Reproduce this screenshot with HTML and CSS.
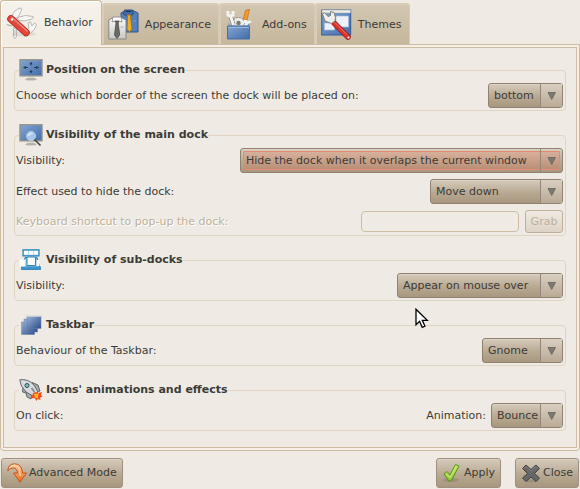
FILE: index.html
```html
<!DOCTYPE html>
<html lang="en">
<head>
<meta charset="utf-8">
<title>Dock configuration</title>
<link rel="stylesheet" href="styles.css">
</head>
<body>
<svg class="defs" aria-hidden="true">
  <defs>
    <linearGradient id="blue" x1="0" y1="0" x2="1" y2="1"><stop offset="0" stop-color="#83a7d4"/><stop offset="1" stop-color="#426ba8"/></linearGradient>
    <linearGradient id="shirt" x1="0" y1="0" x2="0" y2="1"><stop offset="0" stop-color="#fafafa"/><stop offset="1" stop-color="#c9c9c5"/></linearGradient>
    <linearGradient id="navy" x1="0" y1="0" x2="1" y2="1"><stop offset="0" stop-color="#9db5d8"/><stop offset="1" stop-color="#2c4c8c"/></linearGradient>
    <linearGradient id="orange" x1="0" y1="0" x2="0" y2="1"><stop offset="0" stop-color="#fbd0a4"/><stop offset="1" stop-color="#e8681c"/></linearGradient>
    <linearGradient id="green" x1="0" y1="0" x2="0" y2="1"><stop offset="0" stop-color="#c4ec5c"/><stop offset="1" stop-color="#8cc63a"/></linearGradient>
    <symbol id="arrow" viewBox="0 0 9 8"><path d="M1 .5h7.5L4.7 7.5z" fill="#7d7972" stroke="#67635c" stroke-width=".8"/></symbol>
    <symbol id="monitor" viewBox="0 0 24 22">
      <ellipse cx="12" cy="20.300" rx="6" ry="1.300" fill="#b9b7b1"/>
      <path d="M9 17h6l1 3H8z" fill="#dddcd8"/><path d="M8 19.800h8" stroke="#a4a29d"/>
      <rect x="1" y=".8" width="22" height="16" fill="url(#blue)" stroke="#92928e" stroke-width="1.400"/>
    </symbol>
  </defs>
</svg>

<main class="dialog">
  <div class="tabs" role="tablist">
    <button class="tab active" role="tab" aria-selected="true">
      <svg class="tab-icon" viewBox="0 0 32 32" aria-hidden="true">
        <ellipse cx="18" cy="27" rx="12" ry="2.500" fill="#e2dcd1"/>
        <g fill="#f6f6f4" stroke="#a9a9a5" stroke-width=".8">
          <path d="M6 10Q7 3 15 .8l.5 2.500-4 8z"/>
          <path d="M11 10.500Q20 7 27 9.500q1 2-1 2.500-7 3-13 1.500z"/>
          <path d="M20 24l3-3-1-5 2.500-1 1.500 4 2.500-3 2 1.500-2 5-5 4.500z"/>
          <path d="M7.500 20.500l3 2v7l-1.500 2-1.500-2z"/>
        </g>
        <path d="M7.500 24h3M7.500 26h3M7.500 28h3" stroke="#999" stroke-width=".7"/>
        <path d="M.8 17.500l5 1.500" stroke="#aaa" stroke-width="1.300"/>
        <path d="M5 12L20 25.500" stroke="#a92a22" stroke-width="7.500" stroke-linecap="round"/>
        <path d="M5 12L20 25.500" stroke="#e2463c" stroke-width="6" stroke-linecap="round"/>
        <path d="M6 10.500L21 24" stroke="#f2877b" stroke-width="1.500" stroke-linecap="round"/>
        <circle cx="6" cy="12.500" r="1.200" fill="#fff"/>
      </svg>
      <span>Behavior</span>
    </button>
    <button class="tab" role="tab" aria-selected="false">
      <svg class="tab-icon" viewBox="0 0 32 32" aria-hidden="true">
        <path d="M13 4l5-2.500h7L30 4v19H14z" fill="#537fba" stroke="#2f5690"/>
        <path d="M16.500 1h8l1 4-5 3-5-3z" fill="#426ca6" stroke="#2a4c80"/><path d="M18 2.500h5" stroke="#182e50"/>
        <path d="M19 6h4l-.5 2 1.500 12-2.500 3-2.500-3L19.700 8z" fill="#f0ad21" stroke="#a47010" stroke-width=".8"/>
        <path d="M.8 11L5 8.500h8l5 2.500v19H.8z" fill="url(#shirt)" stroke="#858582"/>
        <path d="M5 8h8l1 5-3-1-2 1-2-1-3 1z" fill="#fff" stroke="#858582" stroke-width=".8"/>
        <path d="M7 12h4l-.8 2 1.500 12L9 29.500 6.500 26 8 14z" fill="#6b6b66" stroke="#434340" stroke-width=".7"/>
        <path d="M12.500 18h3M25 12h3" stroke="#9aa4ac" stroke-width=".8"/>
      </svg>
      <span>Appearance</span>
    </button>
    <button class="tab" role="tab" aria-selected="false">
      <svg class="tab-icon" viewBox="0 0 32 32" aria-hidden="true">
        <path d="M20.500 1.500l4-1.300-2.500 11h-4z" fill="#f29a30" stroke="#c36b12" stroke-width=".7"/>
        <circle cx="13.500" cy="15" r="6.500" fill="#ecece9" stroke="#858580" stroke-dasharray="2 1"/><circle cx="13.500" cy="14" r="2.200" fill="#777771"/>
        <g fill="none" stroke="#858580" stroke-width="4.400"><path d="M5.500 7l3 9M23.500 13l-4 5"/></g>
        <g fill="none" stroke="#f3f3f1" stroke-width="3"><path d="M3 2v4q2.500 2 5 0V2M5.500 7l3 9M20.500 11v2q3 2 5-1M23.500 13l-4 5"/></g>
        <path d="M3 14.500l3 3h16l3-3" fill="none" stroke="#8ca0b8" stroke-width="1.500"/>
        <path d="M2.500 17h22v13h-22z" fill="url(#blue)" stroke="#426da8"/><path d="M3 18.500h21" stroke="#9ab9dc"/>
      </svg>
      <span>Add-ons</span>
    </button>
    <button class="tab" role="tab" aria-selected="false">
      <svg class="tab-icon" viewBox="0 0 32 32" aria-hidden="true">
        <rect x=".7" y="1" width="29" height="25" fill="url(#blue)" stroke="#325da0"/>
        <path d="M1 1h28.500v3H1z" fill="#eeeeec" stroke="#aaa" stroke-width=".6"/>
        <path d="M15 7h12.500v11H15zM3.500 14h10v7h-10z" fill="#eef2f8" stroke="#a3bad8" stroke-width=".7"/>
        <path d="M13 14l14 14" stroke="#9b1717" stroke-width="5.500" stroke-linecap="round"/>
        <path d="M13 14l14 14" stroke="#dd3430" stroke-width="4" stroke-linecap="round"/><path d="M14 13.500l12 12" stroke="#f37a6d"/>
        <path d="M1.500 5l2-1.500 3.500 4 2.500-1V2.500l3.500 1 1.500 5L14 12l-3.500 2.500L4 12z" fill="#eeeeeb" stroke="#81817c"/>
        <circle cx="27.500" cy="28.500" r="1" fill="#fff"/>
      </svg>
      <span>Themes</span>
    </button>
  </div>

  <section class="panel" role="tabpanel" aria-label="Behavior">
    <div class="panel-body">
      <fieldset class="group">
        <legend><svg class="group-icon" viewBox="0 0 24 22" aria-hidden="true"><use href="#monitor"/><path d="M12 2.800L10.300 5.300h3.400zM12 14.500L10.300 12h3.400zM4 8.500l2.800-1.700v3.400zM20 8.500l-2.800-1.700v3.400z" fill="#2b3b57"/><path d="M12 4v2.500M12 11v2M6 8.500h3M15 8.500h3" stroke="#2b3b57" stroke-width="1"/></svg>Position on the screen</legend>
        <div class="row">
          <label for="position">Choose which border of the screen the dock will be placed on:</label>
          <span class="combo"><select id="position"><option>bottom</option></select><svg class="arrow" aria-hidden="true"><use href="#arrow"/></svg></span>
        </div>
      </fieldset>

      <fieldset class="group">
        <legend><svg class="group-icon" viewBox="0 0 24 22" aria-hidden="true"><use href="#monitor"/><path d="M15 15l6.500 6.500" stroke="#45423e" stroke-width="1.600"/><circle cx="12" cy="12" r="4.500" fill="#a7c6ea" stroke="#c6d5e6" stroke-width=".8"/><path d="M9.500 12q.5-3 4-2.500" fill="none" stroke="#dceafa" stroke-width="1.500"/></svg>Visibility of the main dock</legend>
        <div class="row">
          <label for="dock-visibility">Visibility:</label>
          <span class="combo widest focused"><select id="dock-visibility"><option>Hide the dock when it overlaps the current window</option></select><svg class="arrow" aria-hidden="true"><use href="#arrow"/></svg></span>
        </div>
        <div class="row">
          <label for="effect">Effect used to hide the dock:</label>
          <span class="combo roomy"><select id="effect"><option>Move down</option></select><svg class="arrow" aria-hidden="true"><use href="#arrow"/></svg></span>
        </div>
        <div class="row shortcut">
          <label for="shortcut">Keyboard shortcut to pop-up the dock:</label>
          <input id="shortcut" type="text" disabled>
          <button class="grab" disabled>Grab</button>
        </div>
      </fieldset>

      <fieldset class="group">
        <legend><svg class="group-icon" viewBox="0 0 24 22" aria-hidden="true">
          <path d="M4 .8h16v6H4z" fill="#b5dcf0" stroke="#2581b9" stroke-width="1.200"/><path d="M5 2h4v3.500H5zM10 2h4v3.500h-4zM15 2h4v3.500h-4z" fill="#fff"/>
          <path d="M6 8.500h12l3.500 12h-19z" fill="#84c1e3" stroke="#2581b9"/><path d="M2 17.500h20v3.200H2z" fill="#3f93c8"/><path d="M.5 10.500h6v7h-6zM17.500 11h3v6h-3z" fill="#fff"/><path d="M8 8h8.500v8.500H8z" fill="#fff" stroke="#2c87bf"/>
        </svg>Visibility of sub-docks</legend>
        <div class="row">
          <label for="sub-visibility">Visibility:</label>
          <span class="combo wide"><select id="sub-visibility"><option>Appear on mouse over</option></select><svg class="arrow" aria-hidden="true"><use href="#arrow"/></svg></span>
        </div>
      </fieldset>

      <fieldset class="group">
        <legend><svg class="group-icon" viewBox="0 0 24 22" aria-hidden="true">
          <g fill="url(#navy)" stroke="#6680ac" stroke-width=".5"><path d="M2.500 8h13v12.500h-13z"/><path d="M5 5h13.500v13H5z"/><path d="M8 1.500h14v13H8z"/></g><path d="M8 1.800h14" stroke="#dededb" stroke-width="1.800"/>
        </svg>Taskbar</legend>
        <div class="row">
          <label for="taskbar">Behaviour of the Taskbar:</label>
          <span class="combo medium"><select id="taskbar"><option>Gnome</option></select><svg class="arrow" aria-hidden="true"><use href="#arrow"/></svg></span>
        </div>
      </fieldset>

      <fieldset class="group">
        <legend><svg class="group-icon" viewBox="0 0 24 22" aria-hidden="true">
          <path d="M4 8l-.5 5 3.500 1 1 4 4 2 1-4zM13 3.500l6 2.500 2 6-4 1z" fill="#a9acad" stroke="#484b4c" stroke-width=".8"/>
          <path d="M.8.800Q9-.5 15 6l4 7-5 4-7-4Q1 7 .8.800z" fill="#d8dbdd" stroke="#555a5c" stroke-width=".9"/>
          <circle cx="8" cy="6.500" r="2" fill="#80c4cc" stroke="#28474e"/><path d="M12.500 9l3 4" stroke="#808588" stroke-width="1.500"/>
          <path d="M14 14l3-1 2 1 4-1-1 3 1.500 2-2.500.500.500 2.500-3-1-1 2-2-3-3 .5z" fill="#f4511d"/><path d="M15 15l5-.5-1 2.500 0 2.500-3-1z" fill="#ffb51d"/>
        </svg>Icons' animations and effects</legend>
        <div class="row">
          <span class="row-name">On click:</span>
          <label class="inline" for="animation">Animation:</label>
          <span class="combo snug"><select id="animation"><option>Bounce</option></select><svg class="arrow" aria-hidden="true"><use href="#arrow"/></svg></span>
        </div>
      </fieldset>
    </div>
  </section>

  <footer class="actions">
    <button class="action advanced"><svg class="action-icon" viewBox="0 0 20 20" aria-hidden="true"><path d="M.8 8Q1 1 7.500.8 15 1 15.500 10h4L13 19.200 6.500 10h4Q10 5 6 5 2.500 5 .8 8z" fill="url(#orange)" stroke="#c9551a"/><path d="M2.500 5Q8-.5 12 5l1.500 8" fill="none" stroke="#fde5cc" stroke-width=".8"/></svg>Advanced Mode</button>
    <button class="action"><svg class="action-icon" viewBox="0 0 20 20" aria-hidden="true"><ellipse cx="9" cy="17" rx="8" ry="2" fill="#8f8372" opacity=".6"/><path d="M2 11l3-2.500 3 3.500L13.500 1.500 17 3 9 18H7z" fill="url(#green)" stroke="#57931c" stroke-linejoin="round"/><path d="M4 10.800l4 4L14 3.500" fill="none" stroke="#dbf48d" stroke-width=".8"/></svg>Apply</button>
    <button class="action"><svg class="action-icon" viewBox="0 0 20 20" aria-hidden="true"><ellipse cx="10" cy="18" rx="8" ry="1.500" fill="#8f8372" opacity=".6"/><path d="M5 2l5 4.500L15 2l3.500 3.500-5 5 5 4.500-3.500 3.500-5-4.500-5 4.500L1.500 15l5-4.500-5-5z" fill="#666766" stroke="#414242" stroke-linejoin="round"/><path d="M3 5.500L5 3.500l5 4.500 5-4.500 2 2" fill="none" stroke="#8c8d8c" stroke-width=".8"/></svg>Close</button>
  </footer>
</main>

<svg class="pointer" viewBox="0 0 14 21" aria-hidden="true"><path d="M1 1.200v15.600l3.600-3.500 2.600 6 2.700-1.200-2.600-5.800h5z" fill="#fff" stroke="#000" stroke-width="1.300"/></svg>
</body>
</html>
```
FILE: styles.css
```css
* { box-sizing: border-box; }

body {
  margin: 0;
  background: #efebe4;
  color: #3c3b37;
  font: 11px/14px "DejaVu Sans", sans-serif;
}

button, select, input { margin: 0; font: inherit; color: inherit; }

.defs { position: absolute; width: 0; height: 0; }

/* Tabs */
.tabs { display: flex; align-items: flex-end; font-size: 12px; }

.tab {
  display: flex;
  align-items: center;
  gap: 5px;
  height: 41px;
  padding: 2px 5px 0;
  border: 1px solid #d9ccb6;
  border-bottom: 0;
  border-radius: 3px 3px 0 0;
  background: linear-gradient(#d2c7b2, #c5b79c);
  box-shadow: inset 1px 1px #d8cdb8;
  font-size: 11px;
}

.tab span { padding-right: 2px; }

.tab.active {
  position: relative;
  gap: 6px;
  height: 45px;
  margin-bottom: -1px;
  padding: 0 6px 0 5px;
  border-color: #cdb79d;
  border-radius: 4px 4px 0 0;
  background: linear-gradient(#f6f2ec, #f1ebe0);
  box-shadow: inset 1px 1px #fff;
}

.tab-icon { width: 32px; height: 32px; }

/* Panel with a double border */
.panel {
  padding: 2px;
  border: 1px solid #cdbb9f;
  border-radius: 0 0 4px 4px;
  background: #f5f0e7;
}

.panel-body {
  display: flex;
  flex-direction: column;
  gap: 13px;
  padding: 11px 10px 16px;
  border: 1px solid #cdbba2;
  background: #efebe4;
}

.group {
  min-width: 0;
  margin: 0;
  padding: 2px 2px 2px 1px;
  border: 1px solid #dfd5c2;
  border-radius: 4px;
}

.group legend {
  display: flex;
  align-items: center;
  gap: 3px;
  height: 22px;
  margin-left: 3px;
  padding: 0;
  font-weight: bold;
}

.group-icon { width: 24px; height: 22px; }

.row { display: flex; align-items: center; height: 25px; }
.row + .row { margin-top: 6px; }
.row > :first-child { margin-right: auto; }
.row .inline { margin-right: 5px; }

/* Drop-downs */
.combo {
  position: relative;
  display: flex;
  height: 25px;
  border: 1px solid #8f8270;
  border-radius: 3px;
  background: linear-gradient(#d5cabb, #b8a992 55%, #a8977e);
  box-shadow: inset 0 1px #ddd4c7;
}

.combo select {
  appearance: none;
  flex: 1;
  padding: 0 28px 0 5px;
  border: 0;
  outline: 0;
  background: linear-gradient(#d9cfc2, #b9aa95) right / 21px 100% no-repeat;
}

.combo::after {
  content: "";
  position: absolute;
  inset: 0 21px 0 auto;
  border-right: 1px solid #94877a;
}

.combo .arrow {
  position: absolute;
  top: 8px;
  right: 6px;
  width: 9px;
  height: 8px;
  pointer-events: none;
}

.combo.widest { width: 323px; }
.combo.wide { width: 166px; }
.combo.roomy { width: 133px; }
.combo.medium { width: 81px; }
.combo.snug select { padding-right: 23px; }

.combo.focused select {
  margin: 2px;
  padding: 0 24px 0 2px;
  border: 1px solid #e58a73;
  border-radius: 1px;
  background: linear-gradient(#d7b09c, #b98f76);
}

.shortcut { height: 23px; gap: 6px; color: #bdb19c; text-shadow: 1px 1px #fff; }

.shortcut input {
  width: 158px;
  height: 21px;
  padding: 0 4px;
  border: 1px solid #cdbda3;
  border-radius: 4px;
  background: #efebe4;
}

.grab {
  width: 38px;
  height: 23px;
  padding: 0;
  border: 1px solid #c0b09a;
  border-radius: 3px;
  background: linear-gradient(#eee9e1, #ddd4c7);
}

/* Bottom buttons */
.actions { display: flex; gap: 14px; padding: 7px 1px 1px; }

.action {
  display: flex;
  align-items: center;
  gap: 2px;
  height: 30px;
  padding: 0 5px;
  border: 1px solid #9d907e;
  border-radius: 3px;
  background: linear-gradient(#d5cabb, #b8a992 55%, #a8977e);
  box-shadow: inset 0 1px #ddd4c7;
}

.action.advanced { margin-right: auto; }
.action-icon { width: 20px; height: 20px; }

.pointer {
  position: absolute;
  top: 308px;
  left: 415px;
  width: 14px;
  height: 21px;
  pointer-events: none;
}
```
